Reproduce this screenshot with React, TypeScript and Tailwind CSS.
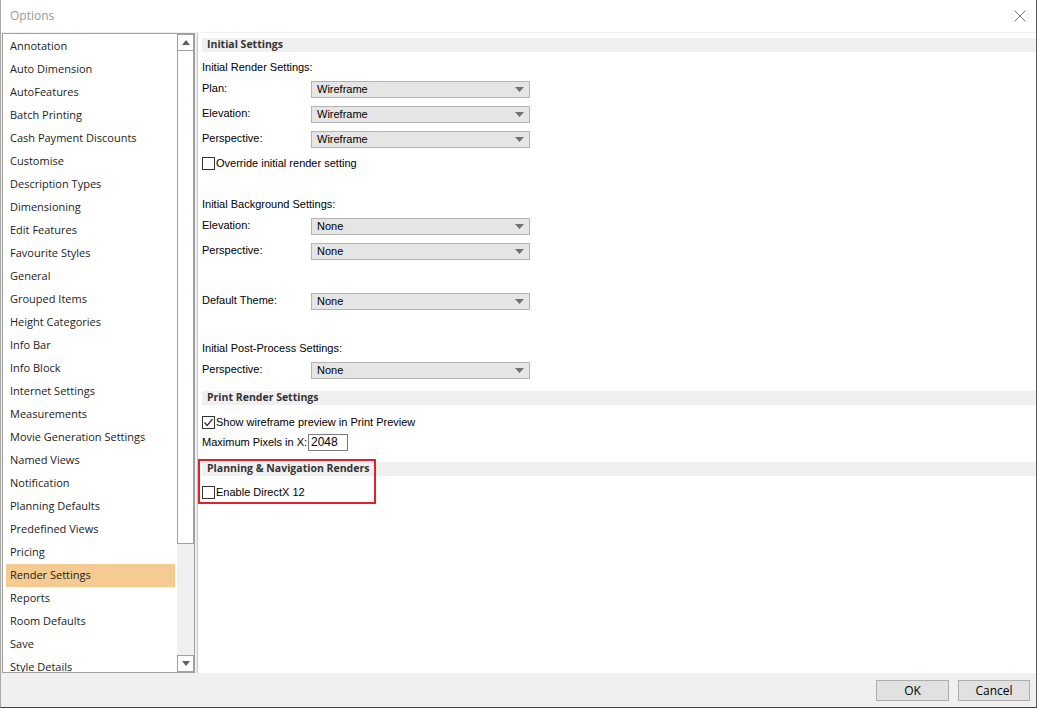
import React from "react";

const items = [
  "Annotation",
  "Auto Dimension",
  "AutoFeatures",
  "Batch Printing",
  "Cash Payment Discounts",
  "Customise",
  "Description Types",
  "Dimensioning",
  "Edit Features",
  "Favourite Styles",
  "General",
  "Grouped Items",
  "Height Categories",
  "Info Bar",
  "Info Block",
  "Internet Settings",
  "Measurements",
  "Movie Generation Settings",
  "Named Views",
  "Notification",
  "Planning Defaults",
  "Predefined Views",
  "Pricing",
  "Render Settings",
  "Reports",
  "Room Defaults",
  "Save",
  "Style Details",
];

const Arrow: React.FC<{ up?: boolean }> = ({ up }) => (
  <svg width="8" height="5" viewBox="0 0 8 5">
    {up ? <polygon points="0,5 8,5 4,0" fill="#606060" /> : <polygon points="0,0 8,0 4,5" fill="#606060" />}
  </svg>
);

const Header: React.FC<{ title: string; className?: string }> = ({ title, className = "" }) => (
  <div className={`h-[14px] bg-[#f0f0f0] pl-[5px] flex items-center font-bold text-[10.5px] text-[#333] font-['Open_Sans',sans-serif] ${className}`}>
    {title}
  </div>
);

const Select: React.FC<{ value: string }> = ({ value }) => (
  <div className="w-[219px] h-[17px] bg-[#e5e5e5] border border-[#b4b4b4] flex items-center justify-between pl-[5px] pr-[5px]">
    <span>{value}</span>
    <svg width="9" height="5" viewBox="0 0 9 5">
      <polygon points="0,0 9,0 4.5,5" fill="#707070" />
    </svg>
  </div>
);

const Row: React.FC<{ label: string; value: string; className?: string }> = ({ label, value, className = "" }) => (
  <div className={`h-[25px] flex items-center ${className}`}>
    <span className="w-[109px] -mt-[3px]">{label}</span>
    <Select value={value} />
  </div>
);

const Check: React.FC<{ label: string; checked?: boolean; className?: string }> = ({ label, checked, className = "" }) => (
  <div className={`flex items-center ${className}`}>
    <div className="w-[13px] h-[13px] border border-[#333] bg-white flex items-center justify-center">
      {checked && (
        <svg width="11" height="11" viewBox="0 0 11 11">
          <polyline points="1.5,5.5 4.2,8.5 9.5,2" fill="none" stroke="#333" strokeWidth="1.3" />
        </svg>
      )}
    </div>
    <span className="ml-[1px]">{label}</span>
  </div>
);

export default function App() {
  return (
    <div className="w-[1037px] h-[708px] flex flex-col bg-[#f0f0f0] border-l border-l-[#a8a8a8] border-r border-r-[#5a5a5a] border-b border-b-[#404040] overflow-hidden">
      <div className="h-[32px] shrink-0 bg-white flex items-center justify-between pl-[9px] pr-[10px]">
        <span className="text-[12px] text-[#999] font-['Open_Sans',sans-serif]">Options</span>
        <svg width="12" height="12" viewBox="0 0 12 12">
          <line x1="0.5" y1="0.5" x2="11.5" y2="11.5" stroke="#777" strokeWidth="1" />
          <line x1="11.5" y1="0.5" x2="0.5" y2="11.5" stroke="#777" strokeWidth="1" />
        </svg>
      </div>
      <div className="h-[1px] shrink-0" />
      <div className="flex h-[640px] shrink-0 pl-[1px]">
        <div className="w-[193px] border border-[#a0a0a0] bg-white flex">
          <div className="flex-1 overflow-hidden pl-[3px] pr-[2px] pt-[0.5px] font-['Open_Sans',sans-serif] text-[11px] text-[#222]">
            {items.map((it) => (
              <div
                key={it}
                className={`h-[23px] flex items-center pl-[4px] ${it === "Render Settings" ? "bg-[#f5cb92]" : ""}`}
              >
                {it}
              </div>
            ))}
          </div>
          <div className="w-[17px] flex flex-col bg-[#f0f0f0]">
            <div className="h-[17px] border border-[#a0a0a0] bg-white flex items-center justify-center">
              <Arrow up />
            </div>
            <div className="h-[493px] border-x border-b border-[#a0a0a0] bg-white" />
            <div className="flex-1" />
            <div className="h-[17px] border border-[#a0a0a0] bg-white flex items-center justify-center">
              <Arrow />
            </div>
          </div>
        </div>
        <div className="w-[2px]" />
        <div className="flex-1 relative bg-white border-l border-[#c8c8c8] flex flex-col pt-[5px] pl-[4px] font-['Liberation_Sans',Arial,sans-serif] text-[11px] text-black">
          <Header title="Initial Settings" />
          <div className="h-[20px] mt-[5px] flex items-center">Initial Render Settings:</div>
          <Row label="Plan:" value="Wireframe" />
          <Row label="Elevation:" value="Wireframe" />
          <Row label="Perspective:" value="Wireframe" />
          <Check label="Override initial render setting" className="h-[22px]" />
          <div className="h-[20px] mt-[20px] flex items-center">Initial Background Settings:</div>
          <Row label="Elevation:" value="None" />
          <Row label="Perspective:" value="None" />
          <Row label="Default Theme:" value="None" className="mt-[25px]" />
          <div className="h-[20px] mt-[24px] flex items-center">Initial Post-Process Settings:</div>
          <Row label="Perspective:" value="None" />
          <Header title="Print Render Settings" className="mt-[8px]" />
          <Check label="Show wireframe preview in Print Preview" checked className="h-[20px] mt-[7px]" />
          <div className="h-[20px] flex items-center">
            <span className="w-[106px]">Maximum Pixels in X:</span>
            <div className="w-[40px] h-[17px] border border-[#7a7a7a] flex items-center pl-[2px] text-[12px]">2048</div>
          </div>
          <Header title="Planning & Navigation Renders" className="mt-[10px]" />
          <Check label="Enable DirectX 12" className="h-[20px] mt-[6px]" />
          <div className="absolute left-0 top-[426px] w-[178px] h-[45px] border-2 border-[#e0202a]" />
        </div>
      </div>
      <div className="flex-1 flex items-center justify-end gap-[9px] pr-[6px] pt-[1px] font-['Open_Sans',sans-serif] text-[12px] text-black">
        <div className="w-[73px] h-[21px] border border-[#adadad] bg-[#e1e1e1] flex items-center justify-center">OK</div>
        <div className="w-[72px] h-[21px] border border-[#adadad] bg-[#e1e1e1] flex items-center justify-center">Cancel</div>
      </div>
    </div>
  );
}
